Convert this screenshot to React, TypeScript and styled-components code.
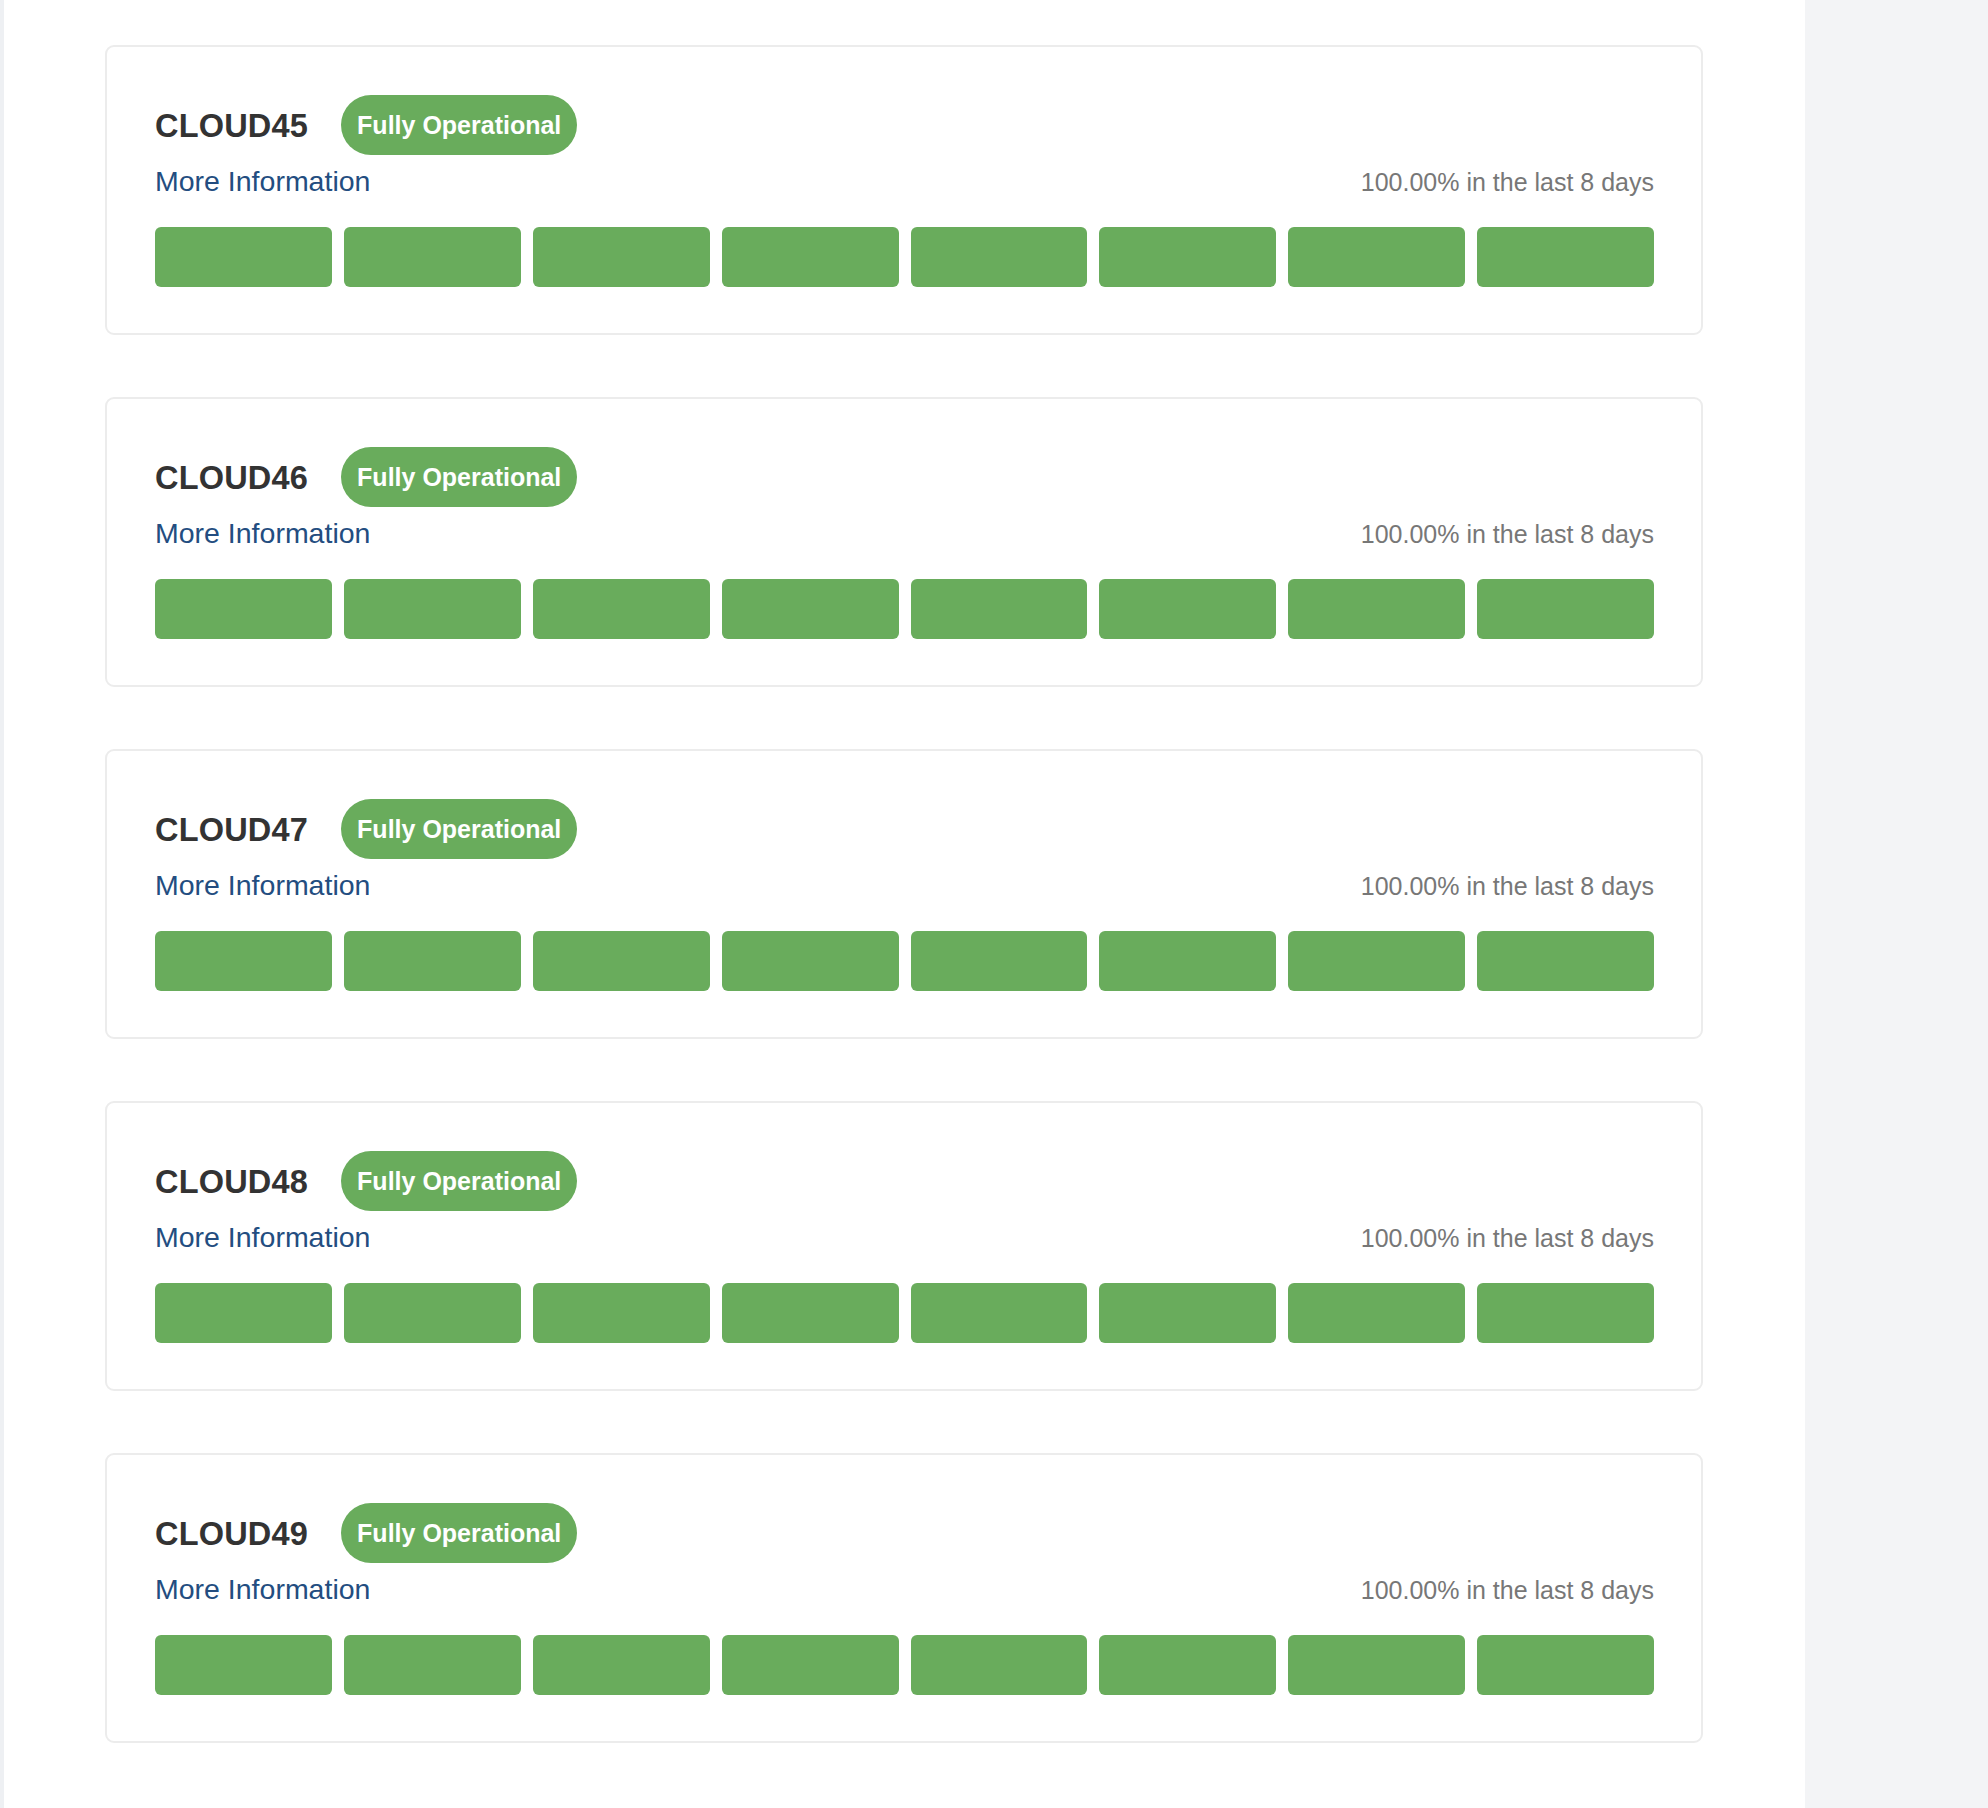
import React from "react";
import styled, { createGlobalStyle } from "styled-components";

const GlobalStyle = createGlobalStyle`
  html, body {
    margin: 0;
    padding: 0;
    background: #f3f4f6;
    font-family: "Liberation Sans", Arial, sans-serif;
  }
  * { box-sizing: border-box; }
`;

const Shell = styled.div`
  display: flex;
  min-height: 1808px;
  background: #f3f4f6;
`;

const LeftEdge = styled.div`
  width: 4px;
  flex: none;
  background: #eef0f3;
`;

const Main = styled.main`
  width: 1801px;
  flex: none;
  background: #ffffff;
  padding: 45px 102px 65px 101px;
  display: flex;
  flex-direction: column;
  gap: 62px;
`;

const Aside = styled.div`
  flex: 1;
  background: #f3f4f6;
`;

const Card = styled.section`
  border: 2px solid #ececec;
  border-radius: 9px;
  padding: 48px 47px 46px 48px;
  display: flex;
  flex-direction: column;
  background: #fff;
`;

const Header = styled.div`
  display: flex;
  align-items: center;
  height: 60px;
  gap: 33px;
`;

const Title = styled.h2`
  margin: 0;
  font-size: 32.5px;
  letter-spacing: 0.2px;
  font-weight: 700;
  color: #333333;
  line-height: 1;
  padding-top: 2px;
`;

const Badge = styled.span`
  display: inline-flex;
  align-items: center;
  height: 60px;
  padding: 0 16px;
  border-radius: 30px;
  background: #69ac5c;
  color: #ffffff;
  font-size: 25px;
  font-weight: 700;
  white-space: nowrap;
`;

const InfoRow = styled.div`
  display: flex;
  justify-content: space-between;
  align-items: baseline;
  margin-top: 6px;
  height: 40px;
  line-height: 40px;
`;

const MoreLink = styled.a`
  font-size: 28.5px;
  color: #234d80;
  text-decoration: none;
`;

const Uptime = styled.span`
  font-size: 25px;
  color: #777777;
`;

const Bars = styled.div`
  display: flex;
  gap: 12px;
  margin-top: 26px;
`;

const Bar = styled.div<{ $color: string }>`
  flex: 1;
  height: 60px;
  border-radius: 6px;
  background: ${(p) => p.$color};
`;

const services = ["CLOUD45", "CLOUD46", "CLOUD47", "CLOUD48", "CLOUD49"];

export default function App() {
  return (
    <>
      <GlobalStyle />
      <Shell>
        <LeftEdge />
        <Main>
          {services.map((name) => (
            <Card key={name}>
              <Header>
                <Title>{name}</Title>
                <Badge>Fully Operational</Badge>
              </Header>
              <InfoRow>
                <MoreLink href="#">More Information</MoreLink>
                <Uptime>100.00% in the last 8 days</Uptime>
              </InfoRow>
              <Bars>
                {Array.from({ length: 8 }).map((_, i) => (
                  <Bar key={i} $color="#69ac5c" />
                ))}
              </Bars>
            </Card>
          ))}
        </Main>
        <Aside />
      </Shell>
    </>
  );
}
